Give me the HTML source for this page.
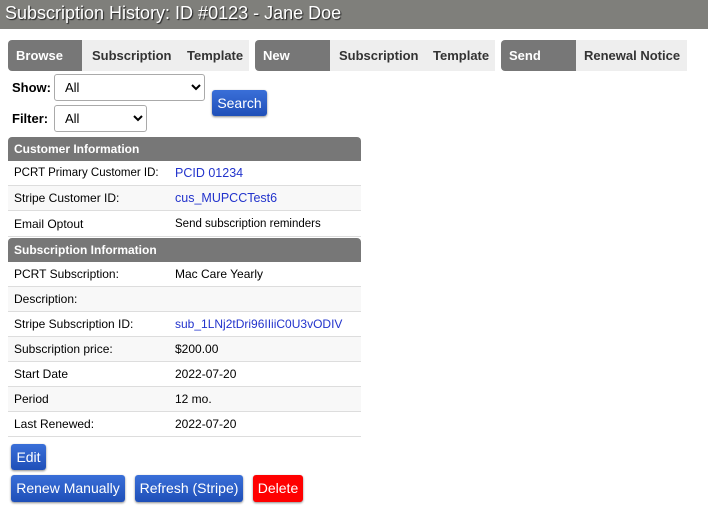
<!DOCTYPE html>
<html><head><style>
body{margin:0;width:708px;height:517px;background:#fff;font-family:"Liberation Sans",Arial,sans-serif;font-size:13px;color:#000;position:relative;overflow:hidden}
.title{position:absolute;left:0;top:0;width:708px;height:29px;background:#7f7f7b;color:#fff;font-size:18px;line-height:27px;padding-left:5px;box-sizing:border-box;text-shadow:1px 1px 1px #222;white-space:nowrap}
.nav{position:absolute;top:40px;height:31px;line-height:31px;font-size:13px;font-weight:bold;white-space:nowrap;color:#333}
.d{background:#777;color:#fff;border-radius:4px 0 0 4px}
.l{background:#eee}
.nav span{position:absolute;top:0}
.a{position:absolute;white-space:nowrap}
select{font-family:"Liberation Sans",Arial,sans-serif;font-size:13px;border:1px solid #aaa;border-radius:3px;background:#fff;height:27px;padding-left:6px}
.btn{position:absolute;background:linear-gradient(#3a6fd8,#1f4fb8);color:#fff;font-size:14px;border-radius:3px;box-shadow:0 1px 2px #888;text-align:center;box-sizing:border-box;white-space:nowrap}
.row{position:absolute;left:8px;width:353px;height:24px;border-bottom:1px solid #ddd;font-size:12px;line-height:24px;white-space:nowrap}
.row span{position:absolute;left:6px}
.row b{position:absolute;left:167px;font-weight:normal}
.g{background:#f8f8f8}
.h{position:absolute;left:8px;width:353px;height:24px;background:#777;color:#fff;font-weight:bold;font-size:12px;line-height:24px;border-radius:4px 4px 0 0;text-indent:6px}
a{color:#2233cc;text-decoration:none;font-size:12.5px}
</style></head><body>
<div class="title">Subscription History: ID #0123 - Jane Doe</div>
<div class="nav d" style="left:8px;width:74px"><span style="left:8px">Browse</span></div>
<div class="nav l" style="left:82px;width:167px"><span style="left:10px">Subscription</span><span style="left:105px">Template</span></div>
<div class="nav d" style="left:255px;width:75px"><span style="left:8px">New</span></div>
<div class="nav l" style="left:330px;width:165px"><span style="left:9px">Subscription</span><span style="left:103px">Template</span></div>
<div class="nav d" style="left:501px;width:75px"><span style="left:8px">Send</span></div>
<div class="nav l" style="left:576px;width:111px"><span style="left:8px">Renewal Notice</span></div>
<div class="a" style="left:12px;top:80px;font-weight:bold;font-size:13px">Show:</div>
<select class="a" style="left:54px;top:74px;width:151px"><option>All</option></select>
<div class="a" style="left:12px;top:111px;font-weight:bold;font-size:13px">Filter:</div>
<select class="a" style="left:54px;top:105px;width:93px"><option>All</option></select>
<div class="btn" style="left:212px;top:90px;width:55px;height:26px;line-height:26px">Search</div>

<div class="h" style="top:137px">Customer Information</div>
<div class="row" style="top:161px"><span style="font-size:11.5px">PCRT Primary Customer ID:</span><b><a>PCID 01234</a></b></div>
<div class="row g" style="top:186px"><span>Stripe Customer ID:</span><b><a>cus_MUPCCTest6</a></b></div>
<div class="row" style="top:212px"><span>Email Optout</span><b style="font-size:11.5px">Send subscription reminders</b></div>
<div class="h" style="top:238px">Subscription Information</div>
<div class="row" style="top:262px"><span>PCRT Subscription:</span><b>Mac Care Yearly</b></div>
<div class="row g" style="top:287px"><span>Description:</span></div>
<div class="row" style="top:312px"><span>Stripe Subscription ID:</span><b><a style="font-size:12px">sub_1LNj2tDri96IIiiC0U3vODIV</a></b></div>
<div class="row g" style="top:337px"><span>Subscription price:</span><b>$200.00</b></div>
<div class="row" style="top:362px"><span>Start Date</span><b>2022-07-20</b></div>
<div class="row g" style="top:387px"><span>Period</span><b>12 mo.</b></div>
<div class="row" style="top:412px"><span>Last Renewed:</span><b>2022-07-20</b></div>

<div class="btn" style="left:11px;top:444px;width:35px;height:26px;line-height:26px">Edit</div>
<div class="btn" style="left:11px;top:475px;width:114px;height:27px;line-height:27px">Renew Manually</div>
<div class="btn" style="left:135px;top:475px;width:108px;height:27px;line-height:27px">Refresh (Stripe)</div>
<div class="btn" style="left:253px;top:475px;width:50px;height:27px;line-height:27px;background:#f00">Delete</div>
</body></html>
